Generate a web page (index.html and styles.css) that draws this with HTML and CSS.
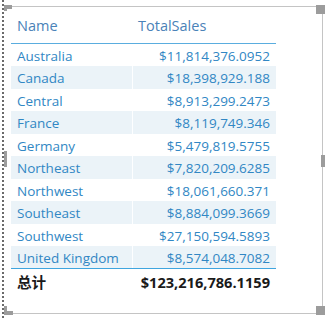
FILE: index.html
```html
<!DOCTYPE html>
<html>
<head>
<meta charset="utf-8">
<link rel="stylesheet" href="styles.css">
</head>
<body>
<div class="stage">
  <div class="dots"></div>
  <div class="visual">
    <span class="handle tl"></span>
    <span class="handle tr"></span>
    <span class="handle bl"></span>
    <span class="handle br"></span>
    <span class="handle ml"></span>
    <span class="handle mr"></span>
    <table class="grid">
      <thead>
        <tr><th class="c-name">Name</th><th class="c-val">TotalSales</th></tr>
      </thead>
      <tbody>
        <tr><td class="c-name">Australia</td><td class="c-val">$11,814,376.0952</td></tr>
        <tr class="alt"><td class="c-name">Canada</td><td class="c-val">$18,398,929.188</td></tr>
        <tr><td class="c-name">Central</td><td class="c-val">$8,913,299.2473</td></tr>
        <tr class="alt"><td class="c-name">France</td><td class="c-val">$8,119,749.346</td></tr>
        <tr><td class="c-name">Germany</td><td class="c-val">$5,479,819.5755</td></tr>
        <tr class="alt"><td class="c-name">Northeast</td><td class="c-val">$7,820,209.6285</td></tr>
        <tr><td class="c-name">Northwest</td><td class="c-val">$18,061,660.371</td></tr>
        <tr class="alt"><td class="c-name">Southeast</td><td class="c-val">$8,884,099.3669</td></tr>
        <tr><td class="c-name">Southwest</td><td class="c-val">$27,150,594.5893</td></tr>
        <tr class="alt last"><td class="c-name">United Kingdom</td><td class="c-val">$8,574,048.7082</td></tr>
      </tbody>
      <tfoot>
        <tr><td class="c-name">总计</td><td class="c-val">$123,216,786.1159</td></tr>
      </tfoot>
    </table>
  </div>
</div>
</body>
</html>
```

FILE: styles.css
```css
html, body {
  margin: 0;
  padding: 0;
  background: #ffffff;
}
.stage {
  display: flex;
  height: 320px;
  width: 327px;
}
.dots {
  width: 2px;
  height: 320px;
  margin-left: 2px;
  background: repeating-linear-gradient(to bottom, #6a6a6a 0, #6a6a6a 2px, transparent 2px, transparent 4px);
}
.visual {
  position: relative;
  margin-top: 6px;
  width: 319px;
  height: 308px;
  border-top: 1px solid #c4c4c4;
  border-right: 1px solid #c4c4c4;
  border-bottom: 1px solid #c4c4c4;
  padding-left: 7px;
  box-sizing: border-box;
}
.handle {
  position: absolute;
  background: #9c9c9c;
}
.handle.tl { left: 0; top: -2px; width: 8px; height: 4px; }
.handle.tl::after { content: ""; position: absolute; left: 0; top: 0; width: 3px; height: 6px; background: #9c9c9c; }
.handle.tr { right: -3px; top: -2px; width: 9px; height: 9px; }
.handle.bl { left: 0; bottom: -2px; width: 9px; height: 4px; }
.handle.bl::after { content: ""; position: absolute; left: 0; bottom: 0; width: 3px; height: 9px; background: #9c9c9c; }
.handle.br { right: -3px; bottom: -2px; width: 9px; height: 9px; }
.handle.ml { left: 0; top: 144px; width: 3px; height: 16px; }
.handle.mr { right: -3px; top: 148px; width: 4px; height: 12px; }

.grid {
  border-collapse: collapse;
  font-family: "Open Sans", "Noto Sans CJK SC", sans-serif;
  font-size: 13.5px;
  color: #3187c4;
  margin-top: 0;
}
.grid th {
  font-weight: normal;
  font-size: 14.5px;
  color: #4a82b8;
  text-align: left;
  height: 36px;
  padding: 0 6px;
  vertical-align: middle;
  border-bottom: 1px solid #5aaddf;
}
.grid th.c-name { width: 109px; }
.grid th.c-val { width: 132px; }
.grid td {
  height: 22.5px;
  padding: 2px 6px 0;
  line-height: 18px;
  white-space: nowrap;
  box-sizing: border-box;
}
.grid td.c-val {
  text-align: right;
  border-left: 1px solid rgba(255,255,255,0.9);
}
.grid tr.alt td {
  background: #ebf3f8;
}
.grid tr.last td {
  border-bottom: 1px solid #3fa5df;
}
.grid tfoot td {
  font-weight: bold;
  font-size: 14.6px;
  color: #1a1a1a;
  height: 25px;
  padding-top: 1px;
  border-left: none;
}
```
